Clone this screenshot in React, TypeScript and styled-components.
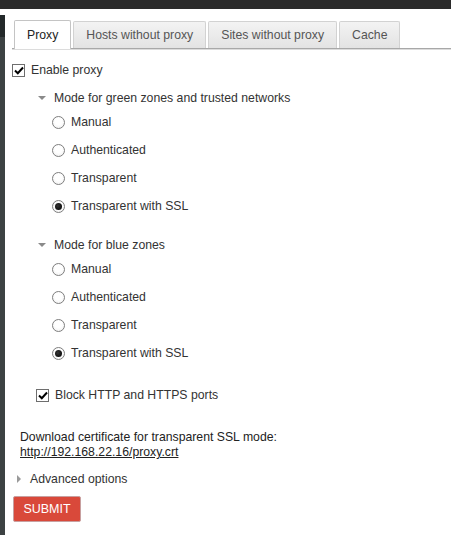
import React from "react";
import styled, { createGlobalStyle } from "styled-components";

const Global = createGlobalStyle`
  html, body { margin: 0; padding: 0; background: #fff; }
  body { font-family: "Liberation Sans", Arial, sans-serif; font-size: 12.25px; color: #333; }
`;

const TopBar = styled.div`
  height: 9px;
  background: #2b2b2b;
`;

const Body = styled.div`
  display: flex;
  min-height: 526px;
`;

const SideStrip = styled.div`
  width: 5px;
  margin-top: 6px;
  background: #3c4243;
  border-top: 22px solid #23292a;
  flex: none;
`;

const Main = styled.div`
  flex: 1;
  display: flex;
  flex-direction: column;
`;

const TabBar = styled.div`
  margin-top: 11px;
  margin-left: 7px;
  padding-left: 2px;
  display: flex;
  gap: 2px;
  border-bottom: 1px solid #a8a8a8;
  box-shadow: 0 1px 0 #dcdcdc;
  height: 28px;
`;

const Tab = styled.div<{ $active?: boolean }>`
  height: ${(p) => (p.$active ? 29 : 27)}px;
  box-sizing: border-box;
  padding: 0 12px;
  display: flex;
  align-items: center;
  justify-content: center;
  font-size: 12.25px;
  color: ${(p) => (p.$active ? "#222" : "#555")};
  background: ${(p) => (p.$active ? "#fff" : "linear-gradient(#f3f3f3, #e3e3e3)")};
  border: 1px solid ${(p) => (p.$active ? "#c4c4c4" : "#d2d2d2")};
  border-bottom: none;
  border-radius: 2px 2px 0 0;
  position: relative;
  z-index: ${(p) => (p.$active ? 1 : 0)};
  margin-top: ${(p) => (p.$active ? 0 : 1)}px;
`;

const Content = styled.div`
  display: flex;
  flex-direction: column;
`;

const Row = styled.label<{ $indent: number; $mt?: number; $h?: number }>`
  display: flex;
  align-items: center;
  gap: 6px;
  height: ${(p) => p.$h ?? 28}px;
  margin-top: ${(p) => p.$mt ?? 0}px;
  padding-left: ${(p) => p.$indent}px;
  color: #333;
`;

const CheckBox = styled.span`
  width: 13px;
  height: 13px;
  box-sizing: border-box;
  border: 1px solid #6e6e6e;
  background: #fff;
  display: flex;
  align-items: center;
  justify-content: center;
  flex: none;
`;

const Radio = styled.span<{ $checked?: boolean }>`
  width: 13px;
  height: 13px;
  box-sizing: border-box;
  border-radius: 50%;
  border: 1px solid #7e7e7e;
  background: radial-gradient(circle at 50% 40%, #fff 40%, #ececec);
  display: flex;
  align-items: center;
  justify-content: center;
  flex: none;
  &::after {
    content: "";
    display: ${(p) => (p.$checked ? "block" : "none")};
    width: 7px;
    height: 7px;
    border-radius: 50%;
    background: radial-gradient(circle at 40% 40%, #333, #000);
  }
`;

const Caret = styled.span<{ $dir: "down" | "right" }>`
  width: 0;
  height: 0;
  flex: none;
  ${(p) =>
    p.$dir === "down"
      ? `border-left: 4px solid transparent; border-right: 4px solid transparent; border-top: 4px solid #8a8a8a;`
      : `border-top: 4px solid transparent; border-bottom: 4px solid transparent; border-left: 4px solid #9a9a9a;`}
`;

const Header = styled.div<{ $mt: number }>`
  display: flex;
  align-items: center;
  gap: 8px;
  height: 20px;
  margin-top: ${(p) => p.$mt}px;
  padding-left: 33px;
  color: #333;
`;

const Note = styled.div`
  margin-top: 25px;
  padding-left: 15px;
  line-height: 15px;
  color: #222;
`;

const Link = styled.a`
  color: #222;
  text-decoration: underline;
`;

const Advanced = styled.div`
  display: flex;
  align-items: center;
  gap: 9px;
  height: 18px;
  margin-top: 10px;
  padding-left: 12px;
  color: #333;
`;

const Submit = styled.button`
  margin-top: 8px;
  margin-left: 8px;
  width: 68px;
  height: 26px;
  background: #d9493a;
  border: 1px solid #c8a0a0;
  border-radius: 2px;
  color: #fff;
  font-family: "Liberation Sans", Arial, sans-serif;
  font-size: 12.5px;
  padding: 0;
  align-self: flex-start;
`;

const Check = () => (
  <svg width="10" height="9" viewBox="0 0 10 9">
    <path d="M1 4.5 L3.8 7.2 L9 1.5" stroke="#000" strokeWidth="2" fill="none" />
  </svg>
);

const modes = ["Manual", "Authenticated", "Transparent", "Transparent with SSL"];

const ModeGroup = ({ title, mt }: { title: string; mt: number }) => (
  <>
    <Header $mt={mt}>
      <Caret $dir="down" />
      <span>{title}</span>
    </Header>
    {modes.map((m, i) => (
      <Row key={m} $indent={47}>
        <Radio $checked={i === 3} />
        <span>{m}</span>
      </Row>
    ))}
  </>
);

export default function App() {
  return (
    <>
      <Global />
      <TopBar />
      <Body>
        <SideStrip />
        <Main>
          <TabBar>
            <Tab $active>Proxy</Tab>
            <Tab>Hosts without proxy</Tab>
            <Tab>Sites without proxy</Tab>
            <Tab>Cache</Tab>
          </TabBar>
          <Content>
            <Row $indent={7} $mt={11} $h={20}>
              <CheckBox><Check /></CheckBox>
              <span>Enable proxy</span>
            </Row>
            <ModeGroup title="Mode for green zones and trusted networks" mt={8} />
            <ModeGroup title="Mode for blue zones" mt={15} />
            <Row $indent={31} $mt={18} $h={20}>
              <CheckBox><Check /></CheckBox>
              <span>Block HTTP and HTTPS ports</span>
            </Row>
            <Note>
              Download certificate for transparent SSL mode:
              <br />
              <Link href="#">http://192.168.22.16/proxy.crt</Link>
            </Note>
            <Advanced>
              <Caret $dir="right" />
              <span>Advanced options</span>
            </Advanced>
            <Submit>SUBMIT</Submit>
          </Content>
        </Main>
      </Body>
    </>
  );
}
